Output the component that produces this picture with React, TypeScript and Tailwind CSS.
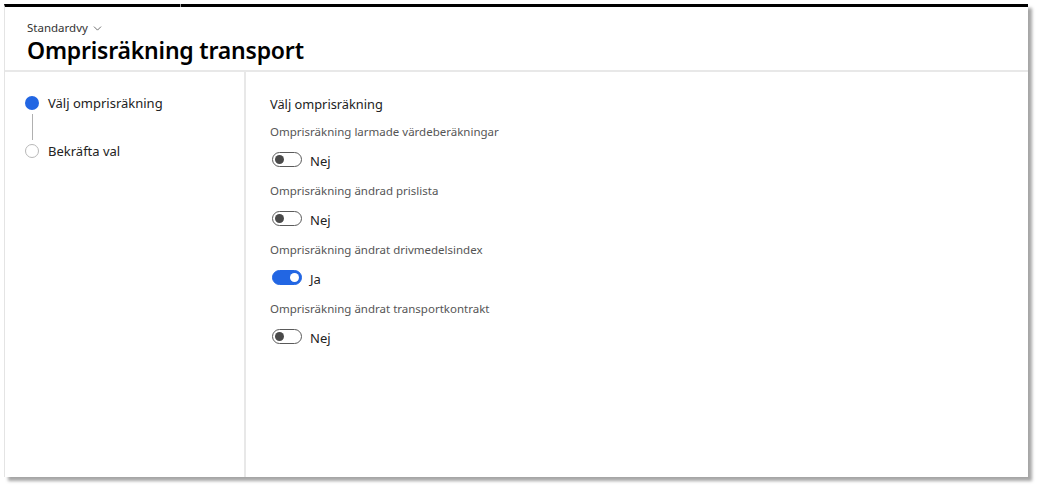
import { ChevronDown } from "lucide-react";

type Option = { label: string; on: boolean };

const options: Option[] = [
    { label: "Omprisräkning larmade värdeberäkningar", on: false },
    { label: "Omprisräkning ändrad prislista", on: false },
    { label: "Omprisräkning ändrat drivmedelsindex", on: true },
    { label: "Omprisräkning ändrat transportkontrakt", on: false },
];

function Toggle({ on }: { on: boolean }) {
    return (
        <div
            className={
                on
                    ? "w-[30px] h-[15px] rounded-full bg-[#2266e3] border border-[#2266e3] flex items-center justify-end px-[2px]"
                    : "w-[30px] h-[15px] rounded-full bg-white border border-[#5a5a5a] flex items-center justify-start px-[2px]"
            }
        >
            <div className={on ? "w-[9px] h-[9px] rounded-full bg-white" : "w-[9px] h-[9px] rounded-full bg-[#4a4a4a]"} />
        </div>
    );
}

export default function App() {
    return (
        <div className="w-[1038px] h-[488px] bg-white pt-[4px] pl-[4px] font-['Noto_Sans',sans-serif]">
            <div className="relative w-[1024px] h-[473px] bg-white border-t-[3px] border-black border-l border-l-[#e4e4e4] shadow-[4px_4px_3px_rgba(0,0,0,0.35)] flex flex-col">
                {/* notch in the top bar */}
                <div className="absolute top-[-3px] left-[175px] w-[1px] h-[3px] bg-[#9a9a9a]" />

                {/* Header */}
                <div className="h-[65px] px-[22px] pt-[14px] border-b-2 border-[#e8e8e8] shrink-0">
                    <div className="flex items-center gap-[3px] text-[11.5px] leading-[14px] text-[#333]">
                        Standardvy
                        <ChevronDown size={13} strokeWidth={1.4} className="text-[#444]" />
                    </div>
                    <h1 className="text-[23px] leading-[28px] mt-[1px] font-semibold text-black tracking-[-0.2px]">
                        Omprisräkning transport
                    </h1>
                </div>

                {/* Body */}
                <div className="flex flex-1">
                    {/* Steps */}
                    <div className="w-[241px] border-r-2 border-[#e8e8e8] pl-[20px] pt-[23px] shrink-0">
                        <div className="flex items-center gap-[9px] h-[16px]">
                            <div className="w-[14px] h-[14px] rounded-full bg-[#2266e3]" />
                            <span className="text-[13px] leading-[16px] text-[#222]">Välj omprisräkning</span>
                        </div>
                        <div className="ml-[6.5px] w-[1px] h-[26px] my-[3px] bg-[#b0b0b0]" />
                        <div className="flex items-center gap-[9px] h-[16px]">
                            <div className="w-[14px] h-[14px] rounded-full border border-[#b8b8b8] bg-white" />
                            <span className="text-[13px] leading-[16px] text-[#222]">Bekräfta val</span>
                        </div>
                    </div>

                    {/* Options */}
                    <div className="flex-1 pl-[24px] pt-[24px]">
                        <div className="text-[12.8px] leading-[16px] text-[#222]">Välj omprisräkning</div>
                        <div className="flex flex-col mt-[13px] gap-[17px]">
                            {options.map((o) => (
                                <div key={o.label} className="flex flex-col">
                                    <div className="text-[11.5px] leading-[14px] text-[#555]">{o.label}</div>
                                    <div className="flex items-center gap-[8px] mt-[12px] ml-[2px] h-[16px]">
                                        <Toggle on={o.on} />
                                        <span className="text-[13px] leading-[16px] text-[#222] mt-[3px]">{o.on ? "Ja" : "Nej"}</span>
                                    </div>
                                </div>
                            ))}
                        </div>
                    </div>
                </div>
            </div>
        </div>
    );
}
